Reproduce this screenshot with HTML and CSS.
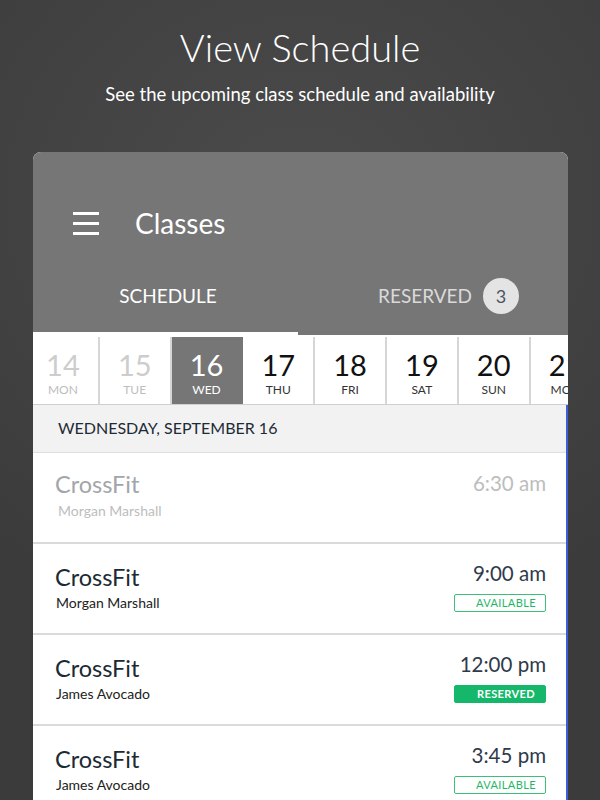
FILE: index.html
```html
<!DOCTYPE html>
<html lang="en">
<head>
    <meta charset="UTF-8">
    <meta name="viewport" content="width=device-width, initial-scale=1.0">
    <title>View Schedule</title>
    <link rel="stylesheet" href="styles.css">
</head>
<body>
    <div class="page">
        <div class="intro">
            <h1>View Schedule</h1>
            <p>See the upcoming class schedule and availability</p>
        </div>
        <div class="phone">
            <div class="appbar">
                <div class="toolbar">
                    <svg class="menu-icon" width="26" height="24" viewBox="0 0 26 24">
                        <rect x="0" y="1" width="26" height="3" fill="#fff"/>
                        <rect x="0" y="11" width="26" height="3" fill="#fff"/>
                        <rect x="0" y="21" width="26" height="3" fill="#fff"/>
                    </svg>
                    <span class="toolbar-title">Classes</span>
                </div>
                <div class="tabs">
                    <div class="tab active">SCHEDULE</div>
                    <div class="tab tab-reserved">RESERVED <span class="count">3</span></div>
                </div>
            </div>
            <div class="days">
                <div class="day past"><span class="num">14</span><span class="name">MON</span></div>
                <div class="day past"><span class="num">15</span><span class="name">TUE</span></div>
                <div class="day selected"><span class="num">16</span><span class="name">WED</span></div>
                <div class="day"><span class="num">17</span><span class="name">THU</span></div>
                <div class="day"><span class="num">18</span><span class="name">FRI</span></div>
                <div class="day"><span class="num">19</span><span class="name">SAT</span></div>
                <div class="day"><span class="num">20</span><span class="name">SUN</span></div>
                <div class="day"><span class="num">21</span><span class="name">MON</span></div>
            </div>
            <div class="list">
                <div class="date-header">WEDNESDAY, SEPTEMBER 16</div>
                <div class="class-row past">
                    <div class="class-info">
                        <div class="class-name">CrossFit</div>
                        <div class="coach">Morgan Marshall</div>
                    </div>
                    <div class="class-meta">
                        <div class="time">6:30 am</div>
                    </div>
                </div>
                <div class="class-row">
                    <div class="class-info">
                        <div class="class-name">CrossFit</div>
                        <div class="coach">Morgan Marshall</div>
                    </div>
                    <div class="class-meta">
                        <div class="time">9:00 am</div>
                        <div class="status available">AVAILABLE</div>
                    </div>
                </div>
                <div class="class-row">
                    <div class="class-info">
                        <div class="class-name">CrossFit</div>
                        <div class="coach">James Avocado</div>
                    </div>
                    <div class="class-meta">
                        <div class="time">12:00 pm</div>
                        <div class="status reserved">RESERVED</div>
                    </div>
                </div>
                <div class="class-row">
                    <div class="class-info">
                        <div class="class-name">CrossFit</div>
                        <div class="coach">James Avocado</div>
                    </div>
                    <div class="class-meta">
                        <div class="time">3:45 pm</div>
                        <div class="status available">AVAILABLE</div>
                    </div>
                </div>
            </div>
        </div>
    </div>
</body>
</html>
```

FILE: styles.css
```css
html, body {
    margin: 0;
    padding: 0;
    height: 100%;
    overflow: hidden;
}
body {
    font-family: Lato, "Open Sans", sans-serif;
    background: radial-gradient(ellipse 90% 60% at 50% 25%, #4b4b4b, #3b3b3b 90%);
    background-color: #3b3b3b;
}
.page {
    height: 800px;
    overflow: hidden;
}
.intro {
    text-align: center;
    color: #fff;
    padding-top: 25px;
    height: 127px;
}
.intro h1 {
    margin: 0;
    font-size: 38px;
    font-weight: 300;
    line-height: 44px;
}
.intro p {
    margin: 14px 0 0;
    font-size: 18.5px;
    line-height: 22px;
}
.phone {
    margin-left: 33px;
    width: 535px;
    background: #fff;
    border-radius: 8px 8px 0 0;
    overflow: hidden;
    height: 700px;
}
.appbar {
    background: #767676;
    color: #fff;
}
.toolbar {
    display: flex;
    align-items: center;
    height: 78px;
    padding-top: 32px;
    padding-left: 40px;
}
.menu-icon {
    display: block;
}
.toolbar-title {
    margin-left: 36px;
    font-size: 28px;
}
.tabs {
    display: flex;
    height: 73px;
}
.tab {
    display: flex;
    align-items: center;
    font-size: 19px;
    padding-bottom: 3px;
    box-sizing: border-box;
    border-bottom: 3px solid transparent;
}
.tab.active {
    width: 265px;
    justify-content: center;
    padding-left: 5px;
    border-bottom-color: #fff;
}
.tab-reserved {
    flex: 1;
    color: #dadada;
    padding-left: 80px;
}
.count {
    display: inline-flex;
    align-items: center;
    justify-content: center;
    width: 36px;
    height: 36px;
    border-radius: 50%;
    background: #e4e4e4;
    color: #4b5563;
    font-size: 18px;
    margin-left: 11px;
}
.days {
    display: flex;
    padding-top: 2px;
    margin-left: -5px;
    border-bottom: 1px solid #cfcfcf;
}
.day {
    flex: 0 0 71.8px;
    box-sizing: border-box;
    height: 67px;
    border-right: 2px solid #d6d6d6;
    display: flex;
    flex-direction: column;
    align-items: center;
    color: #111;
}
.day .num {
    font-size: 29px;
    line-height: 30px;
    margin-top: 13px;
}
.day .name {
    font-size: 12px;
    line-height: 14px;
    margin-top: 3px;
    color: #333;
}
.day.past .num {
    color: #cdcdcd;
}
.day.past .name {
    color: #bdbdbd;
}
.day.selected {
    background: #767676;
    border-right-color: #767676;
}
.day.selected .num,
.day.selected .name {
    color: #fff;
}
.list {
    border-right: 2px solid #3b5fd6;
}
.date-header {
    background: #f2f2f2;
    height: 47px;
    line-height: 46px;
    padding-left: 25px;
    font-size: 16px;
    color: #1d2b36;
    border-bottom: 1px solid #dedede;
}
.class-row {
    display: flex;
    justify-content: space-between;
    height: 89px;
    padding: 0 20px 0 22px;
    border-bottom: 2px solid #dadada;
}
.class-info {
    padding-top: 19px;
}
.class-name {
    font-size: 23.5px;
    line-height: 28px;
    color: #1b2a33;
}
.coach {
    font-size: 14px;
    line-height: 18px;
    margin-top: 3px;
    padding-left: 1px;
    color: #222;
}
.class-meta {
    padding-top: 17px;
    display: flex;
    flex-direction: column;
    align-items: flex-end;
}
.time {
    font-size: 20.5px;
    line-height: 24px;
    color: #2f3a4b;
}
.status {
    box-sizing: border-box;
    width: 92px;
    height: 18px;
    margin-top: 9px;
    border-radius: 2px;
    font-size: 11px;
    line-height: 16px;
    letter-spacing: 0.4px;
    text-align: center;
    padding-left: 12px;
}
.status.available {
    border: 1px solid #3ebf77;
    color: #1db865;
}
.status.reserved {
    background: #15b86a;
    border: 1px solid #15b86a;
    color: #fff;
    font-weight: 700;
}
.class-row.past .class-info {
    padding-top: 17px;
}
.class-row.past .class-name {
    color: #a2a6aa;
}
.class-row.past .coach {
    color: #bdbdbd;
    padding-left: 3px;
    margin-top: 4px;
}
.class-row.past .time {
    color: #bdbdbd;
    margin-top: 1px;
}
```
